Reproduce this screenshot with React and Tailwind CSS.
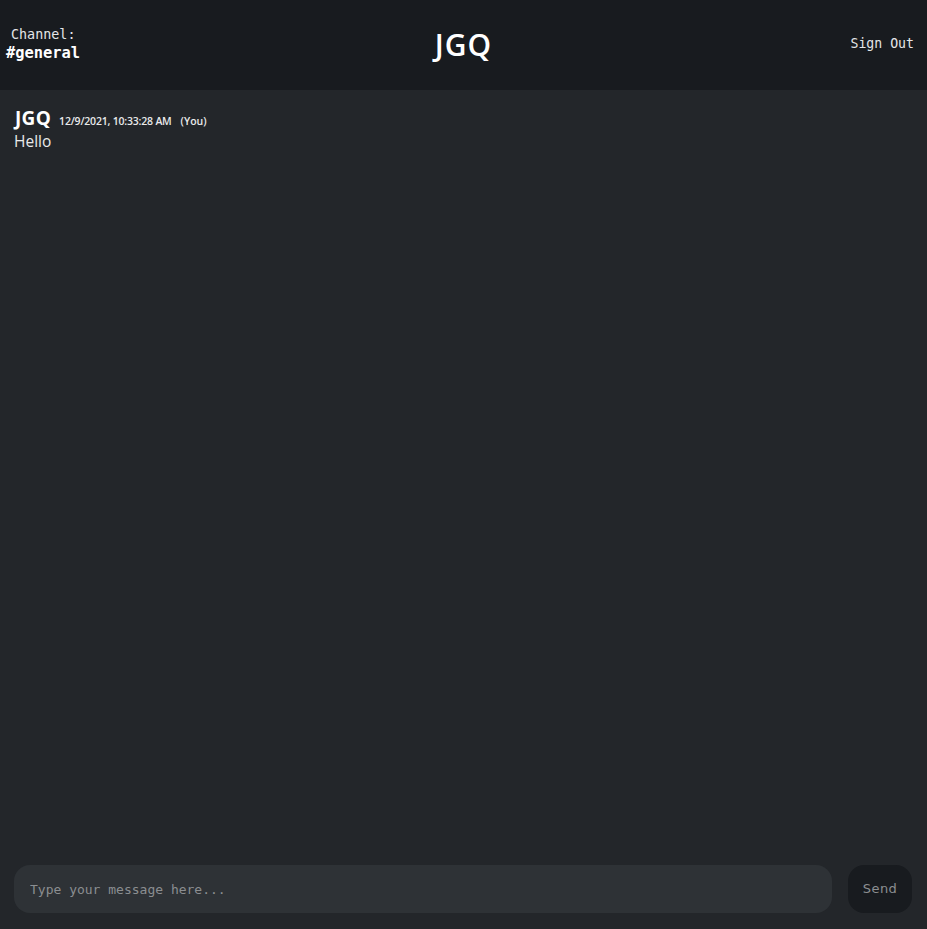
import React from 'react';

const App = () => {
    return (
        <div className="flex flex-col h-[929px] bg-[#23262a] text-white">
            {/* Header */}
            <header className="flex items-center justify-between h-[90px] shrink-0 bg-[#181b1f] px-[6px] font-['DejaVu_Sans_Mono',monospace]">
                <div className="w-[200px] flex flex-col items-start leading-[18px] -mt-[2px]">
                    <span className="text-[13.4px] text-[#e4e6e8] pl-[5px]">Channel:</span>
                    <span className="text-[15.4px] font-bold">#general</span>
                </div>
                <h1 className="text-[30px] font-semibold font-['Open_Sans',sans-serif] tracking-[1px] -mt-[2px]">JGQ</h1>
                <div className="w-[200px] flex justify-end pr-[7px]">
                    <button className="text-[13.2px] text-[#e4e6e8] -mt-[2px]">Sign Out</button>
                </div>
            </header>

            {/* Messages */}
            <main className="flex-1 overflow-y-auto px-[14px] pt-[16px] font-['Open_Sans',sans-serif]">
                <div className="flex flex-col">
                    <div className="flex items-baseline leading-[24px] pl-[1px]">
                        <span className="text-[19px] font-bold tracking-[0.3px]">JGQ</span>
                        <span className="ml-[8px] text-[10.5px] font-semibold tracking-[-0.2px] text-[#e9eaeb]">12/9/2021, 10:33:28 AM</span>
                        <span className="ml-[9px] text-[10.5px] font-semibold text-[#e9eaeb]">(You)</span>
                    </div>
                    <p className="text-[15.5px] leading-[18px] -mt-[1px] text-[#e9eaeb]">Hello</p>
                </div>
            </main>

            {/* Input */}
            <form className="flex items-center gap-[16px] px-[14px] pb-[16px] shrink-0">
                <input
                    type="text"
                    placeholder="Type your message here..."
                    className="flex-1 h-[48px] rounded-[16px] bg-[#2e3236] px-[16px] text-[13px] font-['DejaVu_Sans_Mono',monospace] text-white placeholder:text-[#8b8e91] outline-none"
                />
                <button
                    type="button"
                    className="w-[64px] h-[48px] mr-[1px] rounded-[16px] bg-[#181b1f] text-[13px] tracking-[0.5px] text-[#8b8e91] font-['DejaVu_Sans',sans-serif]"
                >
                    Send
                </button>
            </form>
        </div>
    );
};

export default App;
